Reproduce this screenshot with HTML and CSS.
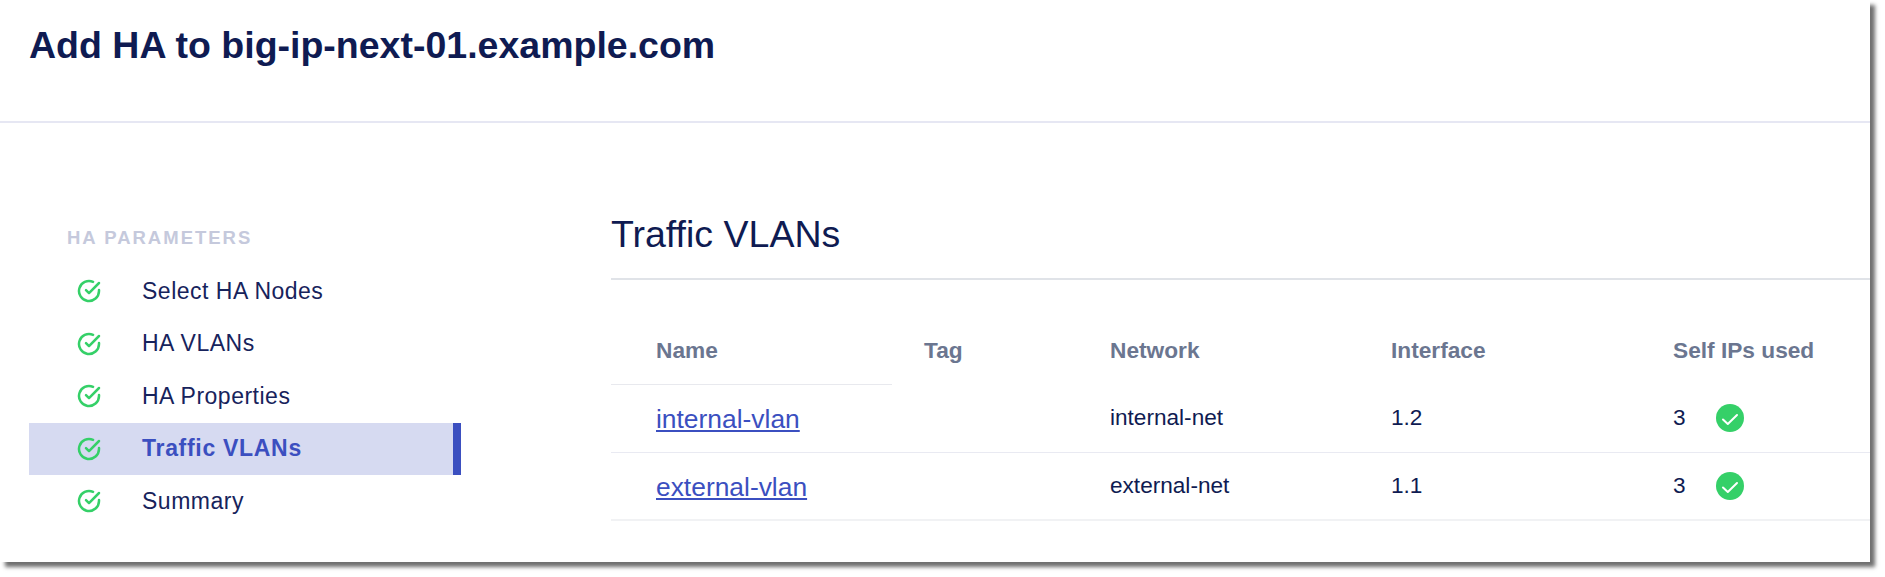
FILE: index.html
```html
<!DOCTYPE html>
<html lang="en">
<head>
<meta charset="utf-8">
<title>Add HA</title>
<link rel="stylesheet" href="styles.css">
</head>
<body>
<div class="panel">
  <header class="page-header">
    <h1 class="page-title">Add HA to big-ip-next-01.example.com</h1>
  </header>
  <div class="content">
    <nav class="sidebar">
      <div class="sidebar-title">HA PARAMETERS</div>
      <ul class="steps">
        <li class="step"><svg class="step-icon" viewBox="0 0 24 24"><path d="M22 11.08V12a10 10 0 1 1-5.93-9.14"/><polyline points="22 4 12 14.01 9 11.01"/></svg><span>Select HA Nodes</span></li>
        <li class="step"><svg class="step-icon" viewBox="0 0 24 24"><path d="M22 11.08V12a10 10 0 1 1-5.93-9.14"/><polyline points="22 4 12 14.01 9 11.01"/></svg><span>HA VLANs</span></li>
        <li class="step"><svg class="step-icon" viewBox="0 0 24 24"><path d="M22 11.08V12a10 10 0 1 1-5.93-9.14"/><polyline points="22 4 12 14.01 9 11.01"/></svg><span>HA Properties</span></li>
        <li class="step step-active"><svg class="step-icon" viewBox="0 0 24 24"><path d="M22 11.08V12a10 10 0 1 1-5.93-9.14"/><polyline points="22 4 12 14.01 9 11.01"/></svg><span>Traffic VLANs</span></li>
        <li class="step"><svg class="step-icon" viewBox="0 0 24 24"><path d="M22 11.08V12a10 10 0 1 1-5.93-9.14"/><polyline points="22 4 12 14.01 9 11.01"/></svg><span>Summary</span></li>
      </ul>
    </nav>
    <main class="main">
      <h2 class="section-title">Traffic VLANs</h2>
      <table class="vlans">
        <thead>
          <tr>
            <th class="col-name">Name</th>
            <th class="col-tag">Tag</th>
            <th class="col-net">Network</th>
            <th class="col-if">Interface</th>
            <th class="col-ips">Self IPs used</th>
          </tr>
        </thead>
        <tbody>
          <tr>
            <td class="cell-name"><a class="vlan-link" href="#">internal-vlan</a></td>
            <td></td>
            <td>internal-net</td>
            <td>1.2</td>
            <td><div class="ips"><span>3</span><svg class="ok-icon" viewBox="0 0 28 28"><circle class="ok-disc" cx="14" cy="14" r="14"/><polyline class="ok-tick" points="7 15.5 11.8 20 21 11"/></svg></div></td>
          </tr>
          <tr>
            <td class="cell-name"><a class="vlan-link" href="#">external-vlan</a></td>
            <td></td>
            <td>external-net</td>
            <td>1.1</td>
            <td><div class="ips"><span>3</span><svg class="ok-icon" viewBox="0 0 28 28"><circle class="ok-disc" cx="14" cy="14" r="14"/><polyline class="ok-tick" points="7 15.5 11.8 20 21 11"/></svg></div></td>
          </tr>
        </tbody>
      </table>
    </main>
  </div>
</div>
</body>
</html>
```
FILE: styles.css
```css
* { box-sizing: border-box; }
html, body { margin: 0; padding: 0; background: #fff; }
body { font-family: "Liberation Sans", Arial, sans-serif; color: #0f1b52; height: 577px; overflow: hidden; }

.panel {
  width: 1870px;
  height: 562px;
  background: #fff;
  box-shadow: 5px 5px 4px #6f6f6f;
}

.page-header {
  height: 123px;
  border-bottom: 2px solid #e6e7f3;
  padding: 23px 29px 0;
}
.page-title {
  margin: 0;
  font-size: 37.5px;
  line-height: 44px;
  font-weight: 700;
  color: #0f1b52;
}

.content { display: flex; }

.sidebar { width: 611px; padding: 103px 0 0 29px; flex: none; }
.sidebar-title {
  padding-left: 38px;
  font-size: 18.5px;
  line-height: 24px;
  font-weight: 700;
  letter-spacing: 2px;
  color: #c5c9dc;
  margin-bottom: 15px;
}
.steps { list-style: none; margin: 0; padding: 0; width: 432px; }
.step {
  display: flex;
  align-items: center;
  height: 52.5px;
  padding-left: 48px;
  font-size: 23px;
  letter-spacing: 0.5px;
  color: #17235c;
}
.step-icon {
  width: 24px;
  height: 24px;
  margin-right: 41px;
  fill: none;
  stroke: #35d068;
  stroke-width: 2.5;
  stroke-linecap: round;
  stroke-linejoin: round;
  flex: none;
}
.step-active {
  background: #d6daf1;
  border-right: 8px solid #3b4fc0;
  color: #3b4fc0;
  font-weight: 700;
  letter-spacing: 0.7px;
}

.main { flex: 1; padding-top: 86px; }
.section-title {
  margin: 0;
  height: 71px;
  border-bottom: 2px solid #e0e3e8;
  font-size: 37.5px;
  line-height: 50px;
  font-weight: 400;
  color: #0f1b52;
}

.vlans {
  width: 100%;
  margin-top: 35px;
  table-layout: fixed;
  border-collapse: collapse;
}
.vlans th {
  height: 69px;
  padding: 2px 0 0 32px;
  text-align: left;
  font-size: 22.7px;
  font-weight: 700;
  color: #6b7690;
}
.col-name { width: 281px; border-bottom: 1px solid #e8e9ee; }
.vlans th.col-name { padding-left: 45px; }
.col-tag { width: 186px; }
.col-net { width: 281px; }
.col-if { width: 282px; }

.vlans td {
  height: 68px;
  padding: 1px 0 0 32px;
  font-size: 22.6px;
  color: #0f1b52;
  border-bottom: 1px solid #e9eaf2;
}
.vlans tr:last-child td { border-bottom: 2px solid #f1f2f4; }
.vlans td.cell-name { padding-left: 45px; padding-top: 3px; }
.vlan-link { color: #3b4fc0; font-size: 26.4px; text-decoration: underline; }

.ips { display: flex; align-items: center; gap: 30px; }
.ok-icon { width: 28px; height: 28px; flex: none; }
.ok-disc { fill: #35d068; }
.ok-tick { fill: none; stroke: #fff; stroke-width: 2; stroke-linecap: round; stroke-linejoin: round; }
```
